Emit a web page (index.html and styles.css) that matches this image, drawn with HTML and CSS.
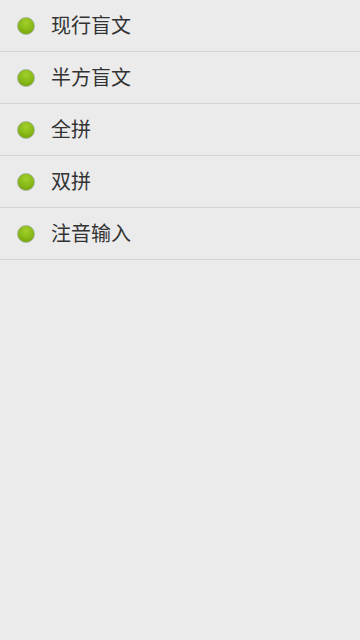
FILE: index.html
```html
<!DOCTYPE html>
<html lang="zh">
<head>
<meta charset="utf-8">
<link rel="stylesheet" href="styles.css">
</head>
<body>
<ul class="list">
  <li class="item"><span class="dot"></span><span class="label">现行盲文</span></li>
  <li class="item"><span class="dot"></span><span class="label">半方盲文</span></li>
  <li class="item"><span class="dot"></span><span class="label">全拼</span></li>
  <li class="item"><span class="dot"></span><span class="label">双拼</span></li>
  <li class="item"><span class="dot"></span><span class="label">注音输入</span></li>
</ul>
</body>
</html>
```
FILE: styles.css
```css
html, body {
  margin: 0;
  padding: 0;
  background: #ebebeb;
  width: 360px;
  height: 640px;
  overflow: hidden;
}
.list {
  list-style: none;
  margin: 0;
  padding: 0;
}
.item {
  display: flex;
  align-items: center;
  height: 51px;
  border-bottom: 1px solid #d3d3d3;
  padding-left: 17px;
  box-sizing: content-box;
}
.dot {
  width: 16px;
  height: 16px;
  border-radius: 50%;
  border: 1px solid #a9b59a;
  background: radial-gradient(circle at 50% 30%, #a2cf2c 0%, #86b815 55%, #6a970a 100%);
  flex: none;
}
.label {
  margin-left: 16px;
  margin-top: -1px;
  font-family: "Noto Sans CJK SC", "Noto Sans", sans-serif;
  font-size: 20px;
  color: #333333;
  line-height: 1;
}
```
